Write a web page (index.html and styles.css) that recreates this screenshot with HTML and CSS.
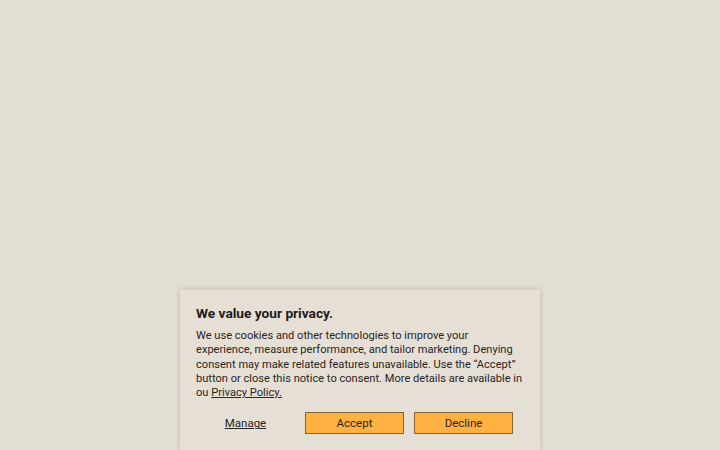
FILE: index.html
```html
<!DOCTYPE html>
<html lang="en">
<head>
    <meta charset="UTF-8">
    <title>Privacy</title>
    <link rel="stylesheet" href="styles.css">
</head>
<body>
    <div class="page">
        <!-- Cookie notice -->
        <div class="consent">
            <h2>We value your privacy.</h2>
            <p>We use cookies and other technologies to improve your experience, measure performance, and tailor marketing. Denying consent may make related features unavailable. Use the &ldquo;Accept&rdquo; button or close this notice to consent. More details are available in ou <a href="#">Privacy Policy.</a></p>
            <div class="consent-actions">
                <a href="#" class="manage">Manage</a>
                <button class="btn">Accept</button>
                <button class="btn">Decline</button>
            </div>
        </div>
    </div>
</body>
</html>
```

FILE: styles.css
```css
html, body {
    margin: 0;
    padding: 0;
    height: 100%;
    overflow: hidden;
}
body {
    background-color: #e3ded3;
    font-family: Roboto, 'Liberation Sans', sans-serif;
    color: #2a2522;
}
.page {
    height: 450px;
    display: flex;
    justify-content: center;
    align-items: flex-end;
}
.consent {
    width: 328px;
    height: 146px;
    padding: 14px 16px 0;
    background-color: #e6dfd5;
    box-shadow: 0 0 6px rgba(0, 0, 0, 0.18);
}
.consent h2 {
    margin: 0 0 7px;
    font-size: 13.7px;
    line-height: 18px;
    font-weight: bold;
    color: #1e1a18;
}
.consent p {
    margin: 0;
    font-size: 11.1px;
    line-height: 14.3px;
}
.consent p a {
    color: inherit;
}
.consent-actions {
    display: flex;
    gap: 10px;
    margin-top: 12px;
}
.manage, .btn {
    width: 99px;
    height: 22px;
    box-sizing: border-box;
    font-family: inherit;
    font-size: 11.5px;
    color: #2a2420;
}
.manage {
    display: flex;
    align-items: center;
    justify-content: center;
}
.btn {
    background-color: #ffb142;
    border: 1px solid #84603a;
    padding: 0;
    cursor: pointer;
}
```
